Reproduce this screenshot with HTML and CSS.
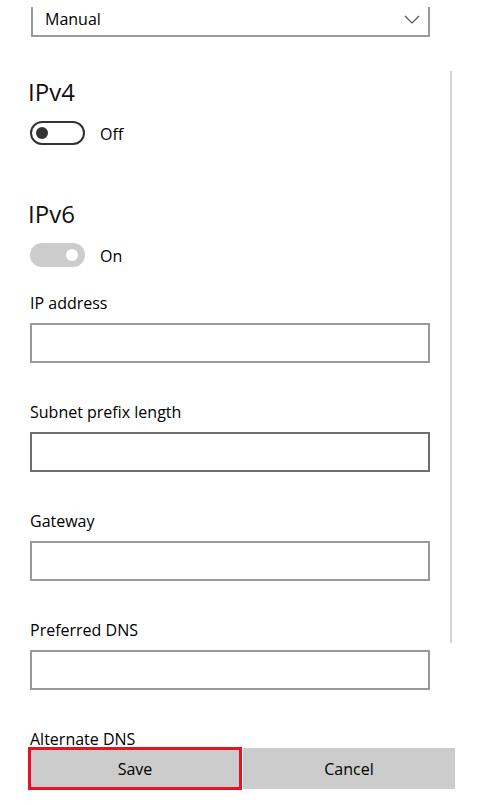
FILE: index.html
```html
<!DOCTYPE html>
<html lang="en">
<head>
<meta charset="utf-8">
<title>Edit IP settings</title>
<link rel="stylesheet" href="styles.css">
</head>
<body>
<div class="panel">
  <div class="dropdown">
    <span class="dropdown-value">Manual</span>
    <svg class="chevron" width="16" height="9" viewBox="0 0 16 9"><path d="M1 1 L8 8 L15 1" fill="none" stroke="#555" stroke-width="1.2"/></svg>
  </div>

  <h2 class="heading heading-first">IPv4</h2>
  <div class="toggle-row">
    <span class="toggle toggle-off"><span class="knob"></span></span>
    <span class="toggle-label">Off</span>
  </div>

  <h2 class="heading heading-next">IPv6</h2>
  <div class="toggle-row">
    <span class="toggle toggle-on"><span class="knob"></span></span>
    <span class="toggle-label">On</span>
  </div>

  <div class="field field-first">
    <div class="label">IP address</div>
    <div class="input"></div>
  </div>
  <div class="field">
    <div class="label">Subnet prefix length</div>
    <div class="input input-hover"></div>
  </div>
  <div class="field">
    <div class="label">Gateway</div>
    <div class="input"></div>
  </div>
  <div class="field">
    <div class="label">Preferred DNS</div>
    <div class="input"></div>
  </div>
  <div class="field">
    <div class="label">Alternate DNS</div>
    <div class="input"></div>
  </div>
</div>

<div class="scrollbar"></div>

<div class="button-bar">
  <div class="btn btn-save">Save</div>
  <div class="btn btn-cancel">Cancel</div>
</div>
</body>
</html>
```
FILE: styles.css
```css
* { box-sizing: border-box; }

html, body {
  margin: 0;
  padding: 0;
  background: #ffffff;
  overflow: hidden;
}

body {
  font-family: "Open Sans", "Noto Sans", sans-serif;
  color: #000000;
  font-size: 16px;
  line-height: 22px;
  width: 483px;
  height: 805px;
  position: relative;
}

.panel {
  padding: 7px 0 0 30px;
  width: 430px;
}

.dropdown {
  margin-left: 1px;
  width: 399px;
  height: 30px;
  border: 2px solid #9a9a9a;
  border-top: none;
  display: flex;
  justify-content: space-between;
  align-items: flex-start;
  padding: 1px 0 0 12px;
}

.dropdown-value {
  line-height: 22px;
}

.chevron {
  margin-top: 7px;
  margin-right: 8px;
}

.heading {
  margin: 0;
  font-size: 24px;
  font-weight: 400;
  line-height: 32px;
  margin-left: -2px;
  color: #111111;
}

.heading-first { margin-top: 39px; }
.heading-next { margin-top: 53px; }

.toggle-row {
  margin-top: 13px;
  display: flex;
  align-items: center;
  gap: 15px;
  height: 24px;
}

.toggle {
  width: 55px;
  height: 24px;
  border-radius: 12px;
  display: flex;
  align-items: center;
}

.toggle-off {
  border: 2px solid #333333;
  padding-left: 4px;
}

.toggle-on {
  background: #cccccc;
  justify-content: flex-end;
  padding-right: 7px;
}

.knob {
  width: 12px;
  height: 12px;
  border-radius: 50%;
}

.toggle-off .knob { background: #333333; }
.toggle-on .knob { background: #ffffff; }

.toggle-label {
  line-height: 22px;
  padding-top: 1px;
}

.field { margin-top: 38px; }
.field-first { margin-top: 25px; }

.label {
  line-height: 22px;
}

.input {
  margin-top: 9px;
  width: 400px;
  height: 40px;
  border: 2px solid #999999;
  background: #ffffff;
}

.input-hover {
  border-color: #6e6e6e;
}

.scrollbar {
  position: absolute;
  left: 450px;
  top: 71px;
  width: 2px;
  height: 572px;
  background: #d4d4d4;
}

.button-bar {
  position: fixed;
  left: 0;
  top: 747px;
  width: 483px;
  height: 58px;
  background: #ffffff;
  padding-left: 28px;
  display: flex;
  align-items: flex-start;
  gap: 1px;
}

.btn {
  display: flex;
  align-items: center;
  justify-content: center;
  background: #cccccc;
  color: #000000;
  font-size: 16px;
}

.btn-save {
  width: 214px;
  height: 43px;
  border: 3px solid #e81123;
  padding-top: 1px;
}

.btn-cancel {
  margin-top: 1px;
  width: 212px;
  height: 41px;
  padding-top: 1px;
}
```
